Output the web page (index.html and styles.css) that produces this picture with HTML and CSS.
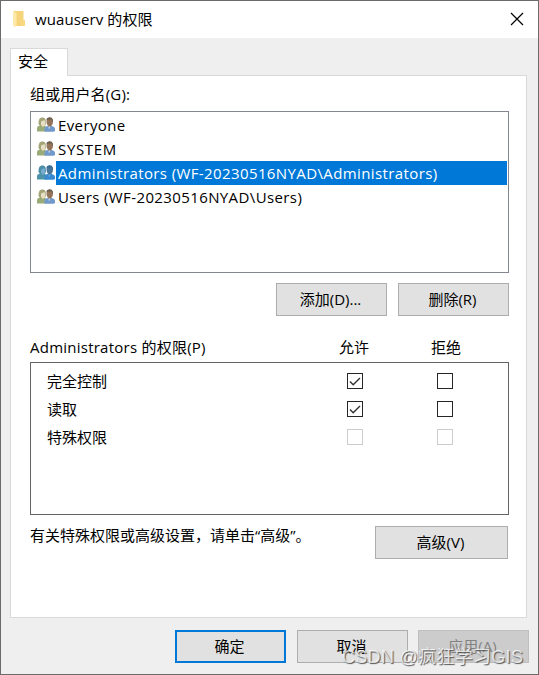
FILE: index.html
```
<!DOCTYPE html>
<html lang="zh-CN">
<head>
    <meta charset="UTF-8">
    <meta name="viewport" content="width=device-width, initial-scale=1.0">
    <title>wuauserv 的权限</title>
    <link rel="stylesheet" href="styles.css">
</head>
<body>
    <!-- 用户图标,只定义一次 -->
    <svg class="defs" width="0" height="0">
        <symbol id="users" viewBox="0 0 18 16">
            <path class="green" d="M0 14.500v-3c0-1.800 1-2.500 3-3l2-.5 4 1.500v5z"/>
            <path class="hair" d="M1.500 7C1.500 2.500 2.500.5 5.500.5S9 3 9 6.500L8 9H3z"/>
            <path class="face" d="M4 4.500L7.500 3l1 2.500-.7 3L6 10 4 8z"/>
            <path class="blue" d="M7.500 14.500V12c0-2 1-2.500 3-3h4c2.500.5 3.500 1.500 3.500 3v2l-1.500.8H8z"/>
            <path class="skin" d="M9.500 4c0-2 1-3.300 3.100-3.300S16 2 16 4.500 14.500 9.800 12.700 9.800 9.500 7 9.500 4z"/>
            <path class="dark" d="M9.500 3c0-1.700 1.200-2.700 3.200-2.700S16.500 2 16 5l-1.500-2.500z"/>
            <path class="shirt" d="M11.300 9.500l.7 3 1.500-3z"/>
        </symbol>
    </svg>

    <div class="window">
        <!-- 标题栏 -->
        <div class="title">
            <svg class="folder" width="14" height="18" viewBox="0 0 14 18">
                <path d="M2 1h9.500v15H2z" fill="#f5d47b"/>
                <path d="M9.500 10H13v6H9.500z" fill="#f8d880"/>
                <path d="M1 1l3.500 2v12.500L3.500 17 1 15.500z" fill="#ffe9a8"/>
            </svg>
            <h1>wuauserv 的权限</h1>
            <svg class="close" width="14" height="14" viewBox="0 0 14 14">
                <path d="M1 1l12 12M13 1L1 13" stroke="#000" stroke-width="1.200"/>
            </svg>
        </div>

        <div class="tab">安全</div>

        <div class="panel">
            <div class="label group_label">组或用户名(G):</div>
            <ul class="users">
                <li><svg><use href="#users"/></svg><span>Everyone</span></li>
                <li><svg><use href="#users"/></svg><span class="system">SYSTEM</span></li>
                <li class="active"><svg><use href="#users"/></svg><span>Administrators (WF-20230516NYAD\Administrators)</span></li>
                <li><svg><use href="#users"/></svg><span>Users (WF-20230516NYAD\Users)</span></li>
            </ul>
            <div class="btns">
                <button>添加(D)...</button>
                <button>删除(R)</button>
            </div>

            <!-- 权限列表 -->
            <div class="label perm_head">
                <span class="perm_name">Administrators 的权限(P)</span>
                <span>允许</span>
                <span>拒绝</span>
            </div>
            <ul class="perms">
                <li>
                    <span>完全控制</span>
                    <i class="box"><svg width="14" height="14"><path d="M2 7.500l3.200 3.200L12 4"/></svg></i>
                    <i class="box"></i>
                </li>
                <li>
                    <span>读取</span>
                    <i class="box"><svg width="14" height="14"><path d="M2 7.500l3.200 3.200L12 4"/></svg></i>
                    <i class="box"></i>
                </li>
                <li>
                    <span>特殊权限</span>
                    <i class="box disabled"></i>
                    <i class="box disabled"></i>
                </li>
            </ul>
            <div class="advanced">
                <p>有关特殊权限或高级设置，请单击“高级”。</p>
                <button>高级(V)</button>
            </div>
        </div>

        <!-- 底部按钮 -->
        <div class="footer">
            <button class="default">确定</button>
            <button>取消</button>
            <button class="disabled">应用(A)</button>
        </div>
        <div class="watermark">CSDN @疯狂学习GIS</div>
    </div>
</body>
</html>
```
FILE: styles.css
```
*{
    margin: 0;
    padding: 0;
    box-sizing: border-box;
}
li{
    list-style: none;
}
body{
    font: 15px/20px "Open Sans", "Noto Sans CJK SC", sans-serif;
    color: #000;
}
.defs{
    position: absolute;
}
.window{
    position: relative;
    width: 539px;
    height: 675px;
    border: 1px solid #6b6b6b;
    background: #efefef;
    overflow: hidden;
}
.title{
    display: flex;
    align-items: center;
    height: 37px;
    padding: 0 14px 2px 11px;
    background: #fff;
}
.title h1{
    flex: 1;
    margin-left: 9px;
    font-size: 15px;
    font-weight: normal;
    letter-spacing: .1px;
}
/* 选项卡,压住面板的上边框 */
.tab{
    position: relative;
    z-index: 1;
    width: 58px;
    height: 28px;
    margin: 10px 0 0 9px;
    padding: 2px 0 0 7px;
    border: 1px solid #d9d9d9;
    border-bottom: 0;
    background: #fff;
}
.panel{
    width: 517px;
    height: 543px;
    margin: -1px 0 0 9px;
    padding: 8px 17px 0 19px;
    border: 1px solid #d9d9d9;
    background: #fff;
}
.label{
    height: 20px;
}
.group_label{
    letter-spacing: .15px;
}
.users{
    width: 479px;
    height: 162px;
    margin-top: 7px;
    padding: 1px;
    border: 1px solid #828790;
}
.users li{
    display: flex;
    height: 24px;
    line-height: 24px;
    padding-left: 5px;
    --green: #9aab78;
    --hair: #a3a578;
    --face: #e6dfc4;
    --blue: #7299cb;
    --skin: #94745a;
    --dark: #70604f;
    --shirt: #c4d6e8;
}
.users svg{
    width: 18px;
    height: 16px;
    margin: 4px 1px 0 0;
}
.users span{
    flex: 1;
    padding-left: 2px;
    letter-spacing: .39px;
    white-space: nowrap;
}
.users .system{
    letter-spacing: .65px;
}
.green{
    fill: var(--green);
}
.hair{
    fill: var(--hair);
}
.face{
    fill: var(--face);
}
.blue{
    fill: var(--blue);
}
.skin{
    fill: var(--skin);
}
.dark{
    fill: var(--dark);
}
.shirt{
    fill: var(--shirt);
}
/* 选中行,图标整体偏蓝 */
.users .active{
    --green: #4d92a8;
    --hair: #4c8ea8;
    --face: #74acce;
    --blue: #3989d2;
    --skin: #4a7699;
    --dark: #386c94;
    --shirt: #62a7e0;
}
.users .active span{
    background: #0078d7;
    color: #fff;
}
button{
    width: 111px;
    height: 33px;
    padding: 0 2px 2px 0;
    border: 1px solid #adadad;
    background: #e1e1e1;
    font: inherit;
    color: #000;
}
.btns{
    display: flex;
    gap: 11px;
    justify-content: flex-end;
    width: 479px;
    margin-top: 10px;
}
.perm_head{
    display: grid;
    grid-template-columns: 309px 92px 1fr;
    margin-top: 21px;
}
.perm_name{
    letter-spacing: .24px;
}
.perms{
    width: 479px;
    height: 153px;
    margin-top: 5px;
    padding: 4px 0 0 16px;
    border: 1px solid #646464;
}
.perms li{
    display: grid;
    grid-template-columns: 300px 90px 1fr;
    align-items: center;
    height: 28px;
}
.box{
    display: block;
    width: 16px;
    height: 16px;
    border: 1px solid #262626;
}
.box.disabled{
    border-color: #ccc;
}
.box svg{
    display: block;
}
.box path{
    fill: none;
    stroke: #333;
    stroke-width: 1.4;
}
.advanced{
    display: flex;
    justify-content: space-between;
    width: 478px;
    margin-top: 11px;
}
.advanced p{
    margin-top: -1px;
}
.advanced button{
    width: 133px;
}
.footer{
    display: flex;
    gap: 11px;
    margin: 12px 0 0 174px;
}
.footer .default{
    border: 2px solid #0078d7;
}
.footer .disabled{
    margin-left: -1px;
    border-color: #bfbfbf;
    background: #ccc;
    color: #838383;
}
.watermark{
    position: absolute;
    left: 341px;
    top: 643px;
    font: 18px/26px "Liberation Sans", "Noto Sans CJK SC", sans-serif;
    letter-spacing: .3px;
    color: rgba(255, 255, 255, .75);
    text-shadow: 1px 1px 1px #555;
    white-space: nowrap;
}
```
